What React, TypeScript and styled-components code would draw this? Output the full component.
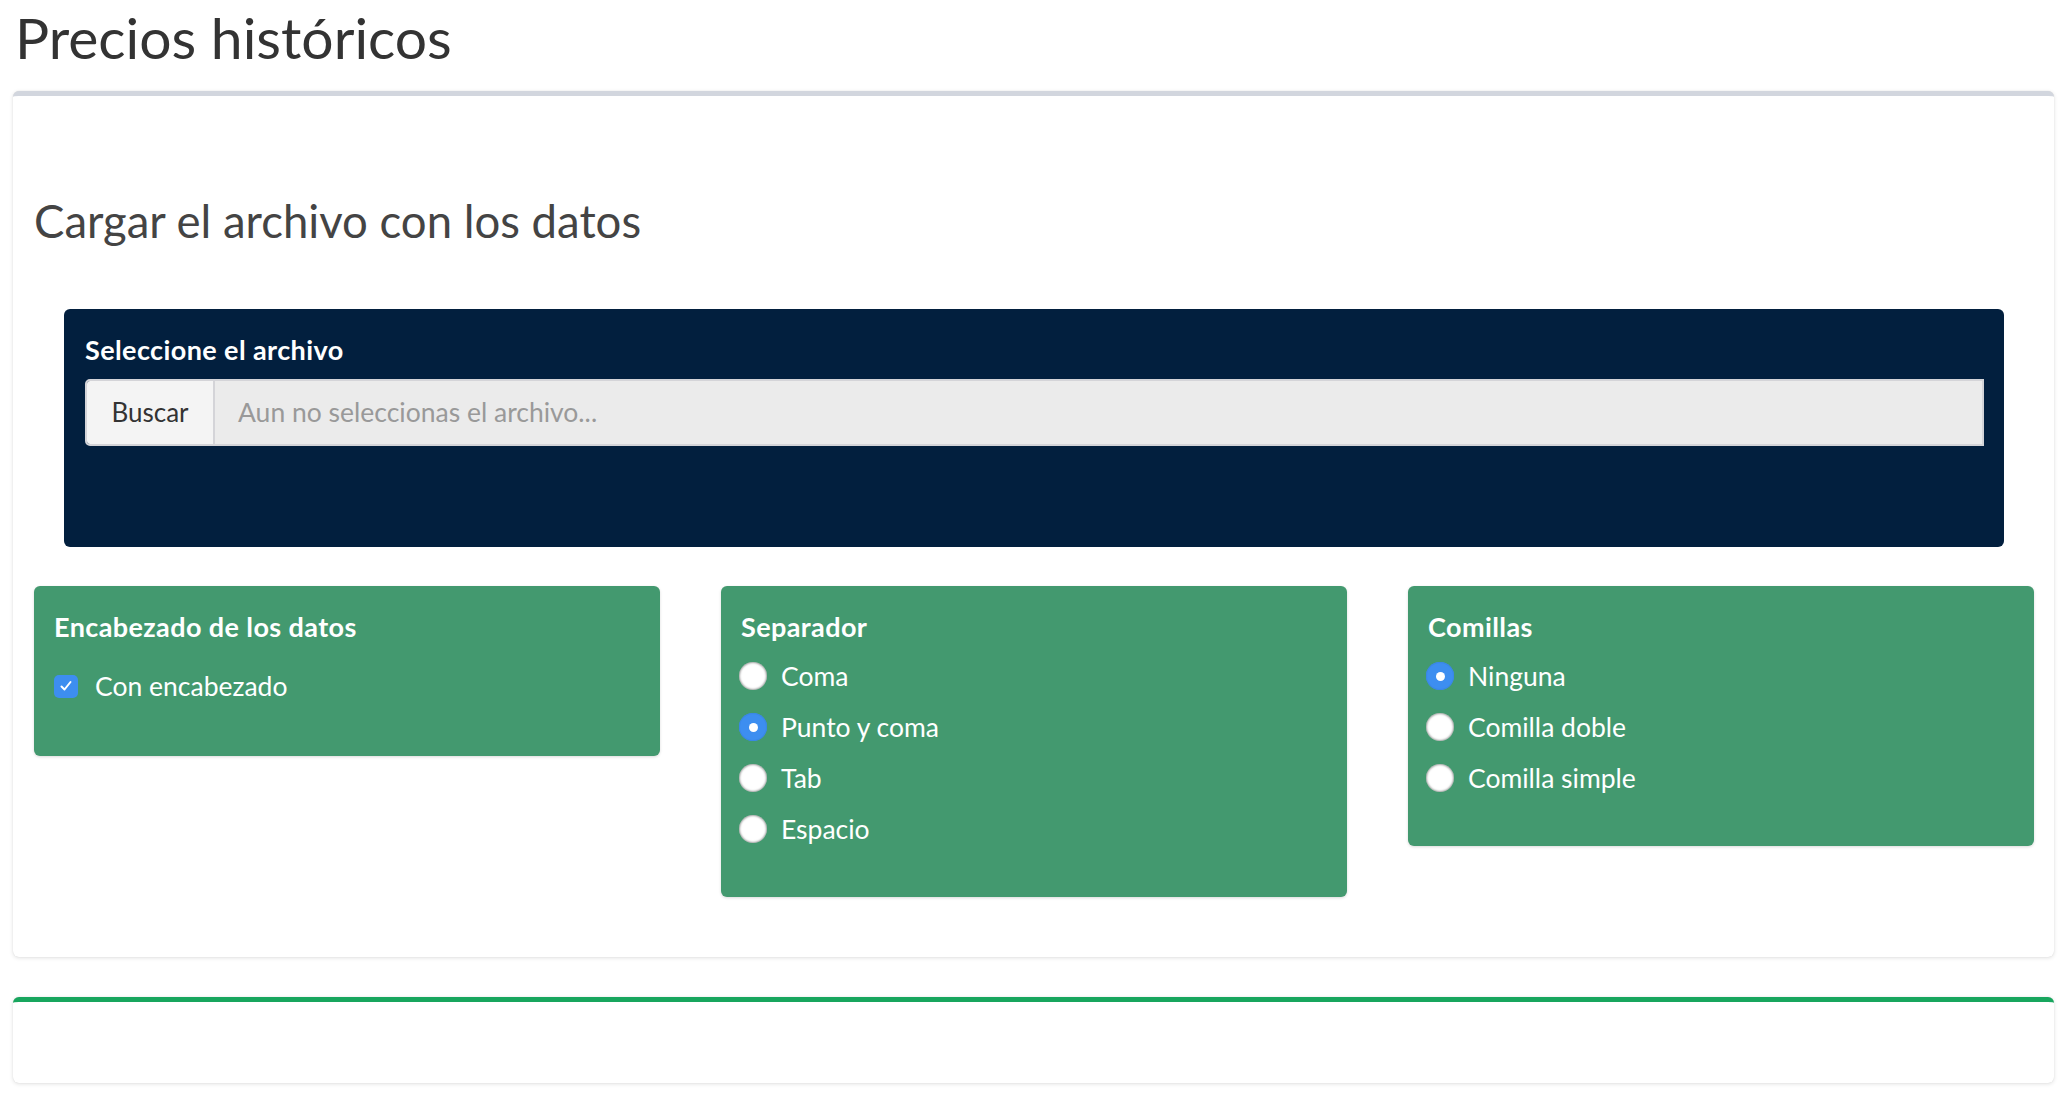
import { useState } from 'react';
import styled, { createGlobalStyle } from 'styled-components';

const GlobalStyle = createGlobalStyle`
  html, body {
    margin: 0;
    padding: 0;
    background: #ffffff;
    font-family: Lato, 'Open Sans', 'Liberation Sans', sans-serif;
    color: #333333;
  }
  * {
    box-sizing: border-box;
  }
`;

const Page = styled.div`
  padding: 9px 17px 30px 13px;
`;

const PageTitle = styled.h1`
  margin: 0 0 25px 2px;
  font-size: 57px;
  font-weight: 400;
  line-height: 1;
  color: #333333;
`;

const Card = styled.section<{ $accent: string }>`
  background: #ffffff;
  border-top: 5px solid ${(p) => p.$accent};
  border-radius: 6px;
  box-shadow: 0 0 1px rgba(0, 0, 0, 0.13), 0 1px 4px rgba(0, 0, 0, 0.12);
  margin-bottom: 40px;
`;

const CardBody = styled.div`
  padding: 102px 20px 60px 21px;
`;

const EmptyBody = styled.div`
  height: 81px;
`;

const SectionTitle = styled.h3`
  margin: 0 0 65px 0;
  font-size: 45.5px;
  font-weight: 400;
  line-height: 1;
  color: #444444;
`;

const FilePanel = styled.div`
  margin: 0 30px 39px 30px;
  background: #021f3e;
  border-radius: 6px;
  padding: 27px 20px 101px 21px;
`;

const BoldLabel = styled.div`
  font-size: 27px;
  font-weight: 700;
  letter-spacing: 0.4px;
  line-height: 1;
  color: #ffffff;
`;

const InputGroup = styled.div`
  margin-top: 16px;
  display: flex;
  height: 67px;
  border: 2px solid #d4d4d8;
  border-radius: 5px 0 0 5px;
  overflow: hidden;
`;

const BrowseButton = styled.div`
  width: 128px;
  display: flex;
  align-items: center;
  justify-content: center;
  background: #f4f4f4;
  border-right: 2px solid #d4d4d8;
  font-size: 26px;
  color: #333333;
`;

const FileField = styled.div`
  flex: 1;
  display: flex;
  align-items: center;
  padding-left: 23px;
  background: #ebebeb;
  font-size: 26.5px;
  color: #999999;
`;

const OptionsGrid = styled.div`
  display: grid;
  grid-template-columns: repeat(3, 1fr);
  column-gap: 61px;
  align-items: start;
`;

const OptionBox = styled.div<{ $bottom: number }>`
  background: #43996f;
  border-radius: 6px;
  box-shadow: 0 1px 3px rgba(0, 0, 0, 0.15);
  padding: 27px 20px ${(p) => p.$bottom}px 20px;
`;

const OptionList = styled.div<{ $top: number }>`
  margin-top: ${(p) => p.$top}px;
  display: flex;
  flex-direction: column;
`;

const OptionRow = styled.label<{ $indent: number }>`
  display: flex;
  align-items: center;
  height: 51px;
  margin-left: ${(p) => p.$indent}px;
  font-size: 26.5px;
  line-height: 51px;
  color: #ffffff;
  cursor: pointer;
`;

const RadioDot = styled.span<{ $on: boolean }>`
  width: 28px;
  height: 28px;
  border-radius: 50%;
  margin-right: 14px;
  flex-shrink: 0;
  display: flex;
  align-items: center;
  justify-content: center;
  background: ${(p) => (p.$on ? '#3d8ef0' : '#ffffff')};
  box-shadow: ${(p) =>
    p.$on ? 'inset 0 0 0 1px #3a86e6' : 'inset 0 0 2px 1px rgba(0, 0, 0, 0.35)'};
  &::after {
    content: '';
    display: ${(p) => (p.$on ? 'block' : 'none')};
    width: 9px;
    height: 9px;
    border-radius: 50%;
    background: #ffffff;
  }
`;

const CheckSquare = styled.span`
  width: 24px;
  height: 23px;
  border-radius: 5px;
  margin-right: 17px;
  flex-shrink: 0;
  display: flex;
  align-items: center;
  justify-content: center;
  background: #3d8ef0;
`;

type RadioGroupProps = {
  title: string;
  options: string[];
  value: string;
  onChange: (v: string) => void;
};

const RadioGroup = ({ title, options, value, onChange }: RadioGroupProps) => (
  <OptionBox $bottom={42}>
    <BoldLabel>{title}</BoldLabel>
    <OptionList $top={11}>
      {options.map((opt) => (
        <OptionRow key={opt} $indent={-2} onClick={() => onChange(opt)}>
          <RadioDot $on={value === opt} />
          <span>{opt}</span>
        </OptionRow>
      ))}
    </OptionList>
  </OptionBox>
);

const App = () => {
  const [header, setHeader] = useState<boolean>(true);
  const [sep, setSep] = useState<string>('Punto y coma');
  const [quote, setQuote] = useState<string>('Ninguna');

  return (
    <Page>
      <GlobalStyle />
      <PageTitle>Precios históricos</PageTitle>

      <Card $accent="#d2d6de">
        <CardBody>
          <SectionTitle>Cargar el archivo con los datos</SectionTitle>
          <FilePanel>
            <BoldLabel>Seleccione el archivo</BoldLabel>
            <InputGroup>
              <BrowseButton>Buscar</BrowseButton>
              <FileField>Aun no seleccionas el archivo...</FileField>
            </InputGroup>
          </FilePanel>

          <OptionsGrid>
            <OptionBox $bottom={44}>
              <BoldLabel>Encabezado de los datos</BoldLabel>
              <OptionList $top={21}>
                <OptionRow $indent={0} onClick={() => setHeader(!header)}>
                  <CheckSquare>
                    {header && (
                      <svg width="14" height="14" viewBox="0 0 14 14">
                        <path
                          d="M2.5 7.5 L5.5 10.5 L11.5 3"
                          fill="none"
                          stroke="#ffffff"
                          strokeWidth="2"
                          strokeLinecap="round"
                          strokeLinejoin="round"
                        />
                      </svg>
                    )}
                  </CheckSquare>
                  <span>Con encabezado</span>
                </OptionRow>
              </OptionList>
            </OptionBox>

            <RadioGroup
              title="Separador"
              options={['Coma', 'Punto y coma', 'Tab', 'Espacio']}
              value={sep}
              onChange={setSep}
            />

            <RadioGroup
              title="Comillas"
              options={['Ninguna', 'Comilla doble', 'Comilla simple']}
              value={quote}
              onChange={setQuote}
            />
          </OptionsGrid>
        </CardBody>
      </Card>

      <Card $accent="#18a65e">
        <EmptyBody />
      </Card>
    </Page>
  );
};

export default App;
